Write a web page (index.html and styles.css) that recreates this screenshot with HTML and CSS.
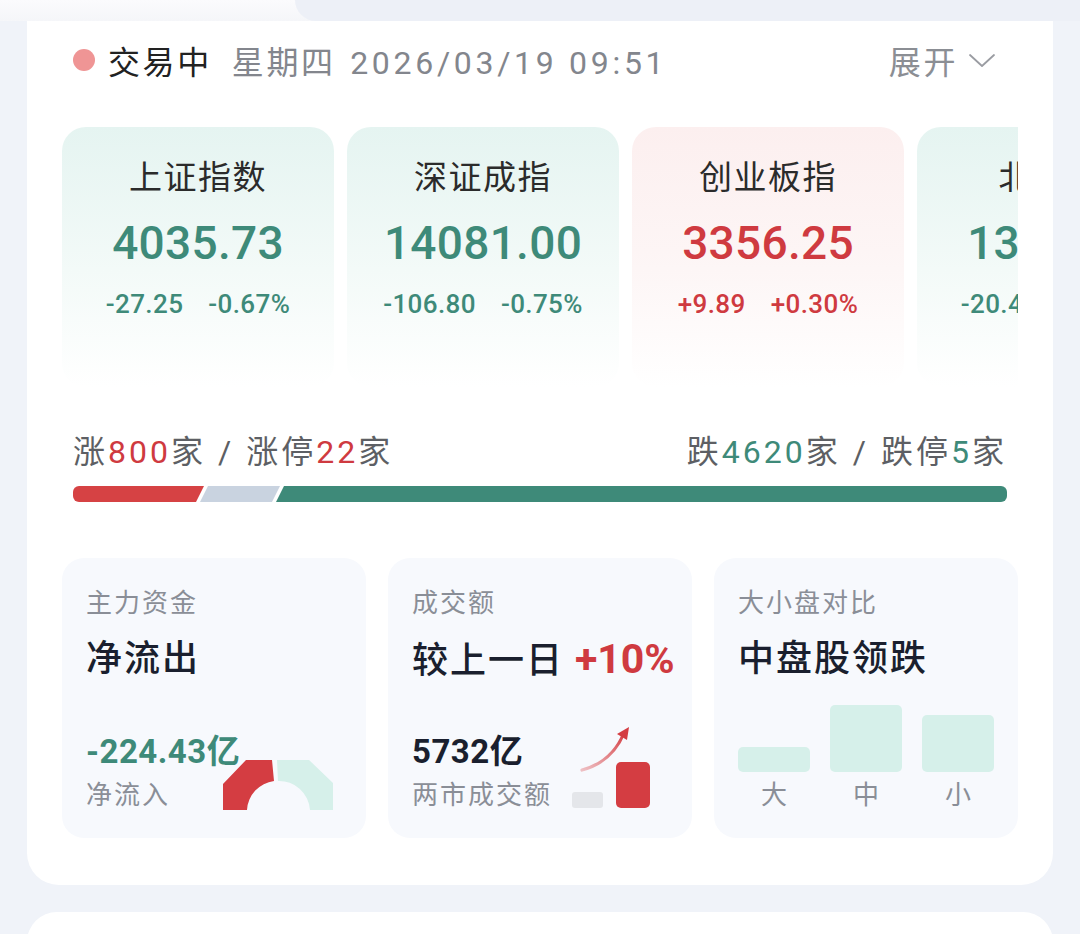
FILE: index.html
```html
<!DOCTYPE html>
<html lang="zh-CN">

<head>
    <meta charset="UTF-8">
    <meta name="viewport" content="width=device-width, initial-scale=1.0">
    <title>大盘概览</title>
    <link rel="stylesheet" href="styles.css">
</head>

<body>
    <div class="topbar">
        <div class="topbar-left"></div>
        <div class="topbar-right"></div>
    </div>

    <main class="panel">
        <header class="head">
            <span class="dot"></span>
            <span class="status">交易中</span>
            <span class="date">星期四 <span class="date-num">2026/03/19 09:51</span></span>
            <span class="expand">展开
                <svg width="28" height="16" viewBox="0 0 28 16">
                    <polyline points="2,3 14,14 26,3" fill="none" stroke="#9a9ca2" stroke-width="1.8" stroke-linecap="round" stroke-linejoin="round" />
                </svg>
            </span>
        </header>

        <div class="indices">
            <div class="index down">
                <h4>上证指数</h4>
                <div class="val">4035.73</div>
                <div class="chg"><span>-27.25</span><span>-0.67%</span></div>
            </div>
            <div class="index down">
                <h4>深证成指</h4>
                <div class="val">14081.00</div>
                <div class="chg"><span>-106.80</span><span>-0.75%</span></div>
            </div>
            <div class="index up">
                <h4>创业板指</h4>
                <div class="val">3356.25</div>
                <div class="chg"><span>+9.89</span><span>+0.30%</span></div>
            </div>
            <div class="index down">
                <h4>北证50</h4>
                <div class="val">1352.18</div>
                <div class="chg"><span>-20.47</span><span>-1.49%</span></div>
            </div>
        </div>

        <div class="breadth">
            <div class="counts">
                <span>涨<b class="red">800</b>家<i class="sep">/</i>涨停<b class="red">22</b>家</span>
                <span>跌<b class="green">4620</b>家<i class="sep">/</i>跌停<b class="green">5</b>家</span>
            </div>
            <div class="bar">
                <i class="seg seg-up"></i>
                <i class="seg seg-flat"></i>
                <i class="seg seg-down"></i>
            </div>
        </div>

        <div class="stats">
            <div class="stat">
                <p class="stat-label">主力资金</p>
                <p class="stat-title">净流出</p>
                <div class="stat-foot">
                    <p class="stat-num green">-224.43亿</p>
                    <p class="stat-sub">净流入</p>
                </div>
                <svg class="gauge" width="112" height="52" viewBox="0 0 112 52">
                    <path d="M1,51 L1,25 L24,1 L50,1 L52,22 A31,31 0 0 0 25,51 Z" fill="#d43d42" />
                    <path d="M55,1 L87,1 L111,24 L111,51 L88,51 A31,31 0 0 0 56,22 Z" fill="#d6f0ea" />
                </svg>
            </div>

            <div class="stat">
                <p class="stat-label">成交额</p>
                <p class="stat-title">较上一日 <b class="pct red">+10%</b></p>
                <div class="stat-foot row">
                    <div>
                        <p class="stat-num">5732亿</p>
                        <p class="stat-sub">两市成交额</p>
                    </div>
                    <svg class="turnover" width="80" height="84" viewBox="0 0 80 84">
                        <defs>
                            <linearGradient id="arrowfade" x1="0" y1="1" x2="1" y2="0">
                                <stop offset="0" stop-color="#e0686c" stop-opacity="0.4" />
                                <stop offset="1" stop-color="#d43d42" />
                            </linearGradient>
                        </defs>
                        <rect x="0" y="66" width="31" height="16" rx="3" fill="#e4e6ea" />
                        <rect x="44" y="36" width="34" height="46" rx="5" fill="#d43d42" />
                        <path d="M10,44 Q40,36 52,7" fill="none" stroke="url(#arrowfade)" stroke-width="3.2" stroke-linecap="round" />
                        <polygon points="57,1 55,14 45,8" fill="#d43d42" />
                    </svg>
                </div>
            </div>

            <div class="stat">
                <p class="stat-label">大小盘对比</p>
                <p class="stat-title">中盘股领跌</p>
                <div class="caps">
                    <div class="cap"><span class="cap-bar h-big"></span><span class="cap-name">大</span></div>
                    <div class="cap"><span class="cap-bar h-mid"></span><span class="cap-name">中</span></div>
                    <div class="cap"><span class="cap-bar h-small"></span><span class="cap-name">小</span></div>
                </div>
            </div>
        </div>
    </main>

    <div class="panel next"></div>
</body>

</html>
```

FILE: styles.css
```css
* {
    padding: 0;
    margin: 0;
    box-sizing: border-box;
}

body {
    width: 1080px;
    height: 934px;
    overflow: hidden;
    background-color: #f0f3f9;
    font-family: Roboto, "Noto Sans CJK SC", sans-serif;
    color: #1a1f2e;
}

.topbar {
    display: flex;
    height: 21px;
    background: linear-gradient(#fbfbfd, #f5f6f9);
}

.topbar-left {
    width: 295px;
}

.topbar-right {
    flex: 1;
    background-color: #edf0f7;
    border-radius: 0 0 0 30px;
}

.panel {
    width: 1026px;
    margin-left: 27px;
    padding: 0 35px 47px;
    background-color: #fff;
    border-radius: 0 0 32px 32px;
}

.panel.next {
    margin-top: 27px;
    height: 60px;
    border-radius: 30px 30px 0 0;
}

/* header */
.head {
    display: flex;
    align-items: center;
    height: 78px;
    padding: 0 22px 0 11px;
    font-size: 32px;
    letter-spacing: 2.6px;
}

.dot {
    width: 22px;
    height: 22px;
    border-radius: 50%;
    background-color: #ef9595;
    margin-right: 13px;
}

.status {
    color: #222;
    margin-right: 20px;
}

.date {
    color: #83868d;
}

.date-num {
    margin-left: 4px;
    letter-spacing: 3.7px;
}

.expand {
    margin-left: auto;
    display: flex;
    align-items: center;
    gap: 10px;
    color: #8b8e94;
}

/* index cards */
.indices {
    display: flex;
    gap: 13px;
    margin-top: 28px;
    overflow: hidden;
}

.index {
    flex: 0 0 272px;
    height: 260px;
    border-radius: 24px;
    text-align: center;
    padding-top: 28px;
}

.index.down {
    background: linear-gradient(#e5f4f1, #f3faf8 55%, #fff);
    color: #3e8a79;
}

.index.up {
    background: linear-gradient(#fcefef, #fdf6f6 55%, #fff);
    color: #cf3a40;
}

.index h4 {
    font-weight: 400;
    font-size: 33px;
    letter-spacing: 1.5px;
    line-height: 46px;
    color: #2b2b2b;
}

.index .val {
    font-size: 46px;
    font-weight: 500;
    line-height: 52px;
    margin-top: 16px;
    letter-spacing: 0.3px;
}

.index .chg {
    display: flex;
    justify-content: center;
    gap: 25px;
    font-size: 26px;
    font-weight: 500;
    line-height: 34px;
    margin-top: 18px;
    letter-spacing: 0.4px;
}

/* rise / fall breadth */
.breadth {
    margin-top: 45px;
    padding: 0 11px;
}

.counts {
    display: flex;
    justify-content: space-between;
    font-size: 32px;
    line-height: 40px;
    color: #5d5f64;
    letter-spacing: 3px;
}

.counts b {
    font-weight: 400;
    letter-spacing: 3px;
}

.sep {
    font-style: normal;
    margin: 0 12px;
}

.red {
    color: #cf3a40;
}

.green {
    color: #3e8a79;
}

.bar {
    display: flex;
    height: 16px;
    margin-top: 14px;
}

.seg {
    height: 100%;
}

.seg-up {
    flex: 0 0 131px;
    background-color: #d64244;
    border-radius: 6px 0 0 6px;
    clip-path: polygon(0 0, 100% 0, calc(100% - 8px) 100%, 0 100%);
}

.seg-flat {
    flex: 0 0 80px;
    margin-left: -4px;
    background-color: #c9d3e0;
    clip-path: polygon(8px 0, 100% 0, calc(100% - 8px) 100%, 0 100%);
}

.seg-down {
    flex: 1;
    margin-left: -4px;
    background-color: #3e8a79;
    border-radius: 0 6px 6px 0;
    clip-path: polygon(8px 0, 100% 0, 100% 100%, 0 100%);
}

/* bottom stats */
.stats {
    display: flex;
    gap: 22px;
    margin-top: 56px;
}

.stat {
    position: relative;
    flex: 1 1 0;
    min-width: 0;
    height: 280px;
    background-color: #f7f9fd;
    border-radius: 22px;
    padding: 28px 24px 26px;
    display: flex;
    flex-direction: column;
}

.stat-label {
    font-size: 26px;
    line-height: 34px;
    color: #8a8e97;
    letter-spacing: 2px;
}

.stat-title {
    font-size: 36px;
    line-height: 44px;
    margin-top: 17px;
    font-weight: 500;
    letter-spacing: 2px;
    white-space: nowrap;
}

.pct {
    font-weight: 700;
    font-size: 41px;
    letter-spacing: 0;
}

.stat-foot {
    margin-top: auto;
}

.stat-foot.row {
    display: flex;
    justify-content: space-between;
    align-items: flex-end;
}

.stat-num {
    font-size: 33px;
    line-height: 40px;
    font-weight: 700;
    letter-spacing: 0.5px;
}

.stat-sub {
    font-size: 26px;
    line-height: 34px;
    margin-top: 6px;
    color: #8a8e97;
    letter-spacing: 2px;
}

.gauge {
    position: absolute;
    left: 160px;
    bottom: 27px;
}

.turnover {
    margin: 0 16px 2px 0;
}

.caps {
    margin-top: auto;
    display: flex;
    justify-content: space-between;
    align-items: flex-end;
}

.cap {
    width: 72px;
    display: flex;
    flex-direction: column;
    align-items: center;
}

.cap-bar {
    width: 100%;
    background-color: #d6f0ea;
    border-radius: 5px;
}

.h-big {
    height: 25px;
}

.h-mid {
    height: 67px;
}

.h-small {
    height: 57px;
}

.cap-name {
    font-size: 26px;
    line-height: 34px;
    margin-top: 6px;
    color: #8a8e97;
}
```
